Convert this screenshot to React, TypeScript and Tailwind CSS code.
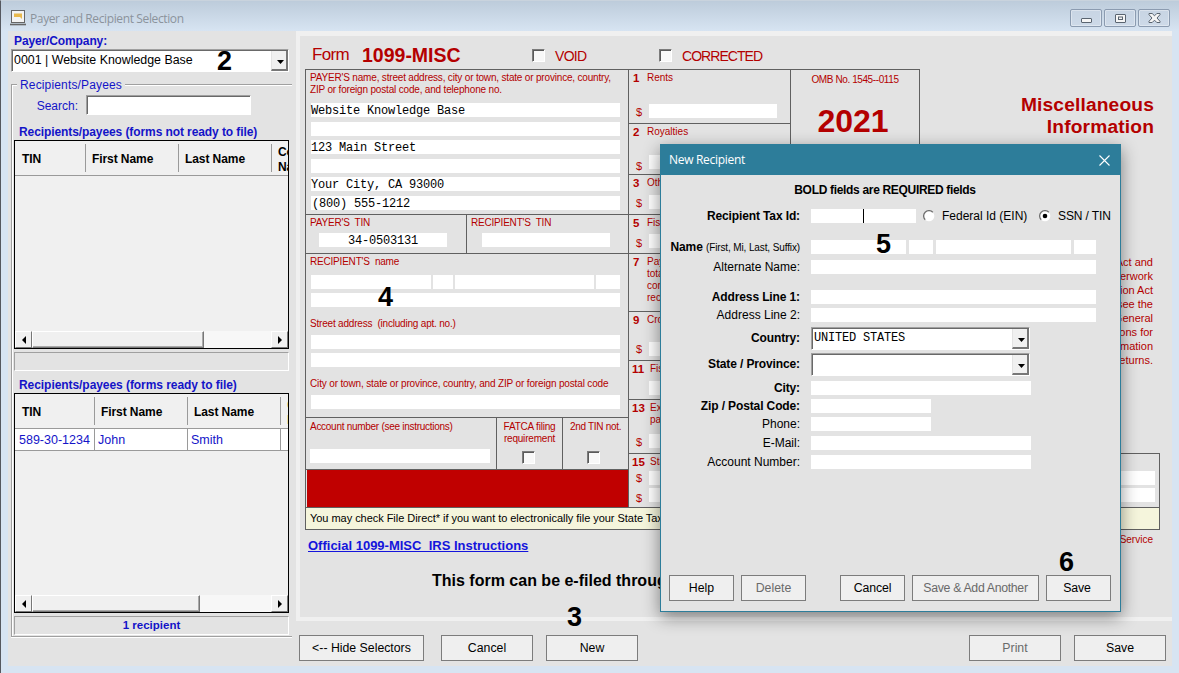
import { ReactNode } from "react";
import clsx from "clsx";

function Field({ className, children }: { className?: string; children?: ReactNode }) {
  return (
    <div className={clsx("h-[14px] shrink-0 whitespace-pre bg-white font-['Liberation_Mono',monospace] text-[12px] leading-[17px] tracking-[-0.2px] text-black", className)}>
      {children}
    </div>
  );
}

function Checkbox({ className }: { className?: string }) {
  return (
    <div className={clsx("h-[13px] w-[13px] shrink-0 border border-r-white border-b-white border-t-[#7b7b7b] border-l-[#7b7b7b] bg-[#f8f8f8]", className)}>
      <div className="h-full w-full border-t border-l border-t-[#5a5a5a] border-l-[#5a5a5a]" />
    </div>
  );
}

function Radio({ checked }: { checked?: boolean }) {
  return (
    <svg width="12" height="12" viewBox="0 0 12 12" className="shrink-0">
      <circle cx="6" cy="6" r="5.3" fill="#fff" />
      <path d="M2.2 9.8A5.3 5.3 0 0 1 9.8 2.2" fill="none" stroke="#6f6f6f" strokeWidth="1.3" />
      {checked && <circle cx="6" cy="6" r="2.3" fill="#000" />}
    </svg>
  );
}

function Combo({ className, children }: { className?: string; children?: ReactNode }) {
  return (
    <div className={clsx("flex shrink-0 border border-t-[#a0a0a0] border-l-[#a0a0a0] border-r-white border-b-white bg-white", className)}>
      <div className="flex w-full border-t border-l border-[#696969]">
        <div className="flex-1 overflow-hidden whitespace-pre">{children}</div>
        <div className="flex w-[17px] items-center justify-center border-r-2 border-b-2 border-l border-r-[#777] border-b-[#777] border-l-[#e3e3e3] bg-[#f0f0f0]">
          <svg width="7" height="4" viewBox="0 0 7 4" className="mt-[3px] ml-[2px]"><path d="M0 0h7L3.5 4z" fill="#000" /></svg>
        </div>
      </div>
    </div>
  );
}

function Button({ className, disabled, children }: { className?: string; disabled?: boolean; children: ReactNode }) {
  return (
    <button className={clsx("h-[26px] shrink-0 whitespace-nowrap border border-[#7c7c7c] bg-[#efefef] text-center text-[12.3px] leading-[24px]", disabled ? "text-[#6a6a6a]" : "text-black", className)}>
      {children}
    </button>
  );
}

function ScrollBar({ thumb }: { thumb: string }) {
  const arrow = "flex h-[17px] w-[17px] items-center justify-center border border-t-white border-l-white border-r-[#777] border-b-[#777] bg-[#f0f0f0]";
  return (
    <div className="flex h-[17px] shrink-0 bg-[#f7f7f7]">
      <div className={arrow}>
        <svg width="4" height="8" viewBox="0 0 4 8"><path d="M4 0v8L0 4z" fill="#000" /></svg>
      </div>
      <div className={clsx("border border-t-white border-l-white border-r-[#777] border-b-[#777] bg-[#f0f0f0] shadow-[inset_-1px_-1px_0_#a9a9a9]", thumb)} />
      <div className="flex-1" />
      <div className={arrow}>
        <svg width="4" height="8" viewBox="0 0 4 8"><path d="M0 0v8l4-4z" fill="#000" /></svg>
      </div>
    </div>
  );
}

function HeadCell({ className, children }: { className: string; children?: ReactNode }) {
  return (
    <div className={clsx("my-[3px] flex shrink-0 items-center border-r border-[#9a9a9a] pt-[3px] text-[12px] font-bold leading-[15px] tracking-[-0.08px]", className)}>
      {children}
    </div>
  );
}

function Sidebar() {
  return (
    <aside className="flex h-[635px] w-[288px] shrink-0 flex-col bg-[#e3e3e3] text-[#1414c8]">
      <div className="ml-[6px] h-[18px] text-[12px] font-bold leading-[21px] tracking-[-0.12px]">Payer/Company:</div>
      <Combo className="ml-[3px] h-[23px] w-[278px]">
        <div className="pl-px text-[12.4px] leading-[18px] text-black">0001 | Website Knowledge Base</div>
      </Combo>
      <div className="mt-[12px] ml-[3px] h-[553px] w-[281px] border border-r-0 border-[#a0a0a0] shadow-[inset_1px_1px_0_#fff,0_1px_0_#fff]">
        <div className="-mt-[8px] ml-[5px] h-[18px] w-fit bg-[#e3e3e3] px-[3px] text-[12px] leading-[17px] tracking-[0.15px]">
          Recipients/Payees
        </div>
        <div className="flex h-[21px]">
          <span className="w-[66px] text-right text-[12px] leading-[22px]">Search:</span>
          <div className="ml-[8px] h-[20px] w-[165px] border border-t-[#a0a0a0] border-l-[#a0a0a0] border-r-white border-b-white bg-white">
            <div className="h-full border-t border-l border-[#696969]" />
          </div>
        </div>
        <div className="ml-[7px] h-[24px] whitespace-nowrap text-[12px] font-bold leading-[32px] tracking-[-0.09px]">Recipients/payees (forms not ready to file)</div>
        <div className="ml-[2px] flex h-[209px] w-[275px] flex-col border border-black bg-[#f0f0f0]">
          <div className="flex h-[35px] shrink-0 overflow-hidden border-b border-[#9a9a9a] text-black">
            <HeadCell className="w-[71px] pl-[7px]">TIN</HeadCell>
            <HeadCell className="w-[93px] pl-[6px]">First Name</HeadCell>
            <HeadCell className="w-[93px] pl-[6px]">Last Name</HeadCell>
            <HeadCell className="w-[93px] pl-[6px]">Company<br />Name</HeadCell>
          </div>
          <div className="flex-1" />
          <ScrollBar thumb="w-[172px]" />
        </div>
        <div className="mt-[3px] ml-[2px] h-[19px] w-[275px] border border-t-[#a0a0a0] border-l-[#a0a0a0] border-r-white border-b-white" />
        <div className="ml-[7px] h-[22px] whitespace-nowrap text-[12px] font-bold leading-[28px] tracking-[-0.06px]">Recipients/payees (forms ready to file)</div>
        <div className="ml-[2px] flex h-[220px] w-[275px] flex-col border border-black bg-[#f0f0f0]">
          <div className="flex h-[35px] shrink-0 overflow-hidden border-b border-[#9a9a9a] text-black">
            <HeadCell className="w-[80px] pl-[7px]">TIN</HeadCell>
            <HeadCell className="w-[93px] pl-[6px]">First Name</HeadCell>
            <HeadCell className="w-[93px] pl-[6px]">Last Name</HeadCell>
            <HeadCell className="w-[93px] pl-[6px] text-[#e0b060]">Company<br />Name</HeadCell>
          </div>
          <div className="flex h-[22px] shrink-0 overflow-hidden border-b border-[#9a9a9a] bg-white text-[12.5px] leading-[22px]">
            <div className="w-[80px] border-r border-[#9a9a9a] pl-[4px]">589-30-1234</div>
            <div className="w-[93px] border-r border-[#9a9a9a] pl-[3px]">John</div>
            <div className="w-[93px] border-r border-[#9a9a9a] pl-[3px]">Smith</div>
          </div>
          <div className="flex-1" />
          <ScrollBar thumb="w-[168px]" />
        </div>
        <div className="mt-[3px] ml-[2px] h-[19px] w-[275px] border border-t-[#a0a0a0] border-l-[#a0a0a0] border-r-white border-b-white text-center text-[11.5px] font-bold leading-[17px]">
          1 recipient
        </div>
      </div>
    </aside>
  );
}

type AmountRow = { no: string; label: ReactNode; height: string; field: string; sign?: string };

const amountRows: AmountRow[] = [
  { no: "1", label: "Rents", height: "h-[54px]", field: "mt-[17px]", sign: "leading-[16px]" },
  { no: "2", label: "Royalties", height: "h-[51px]", field: "mt-[14px]", sign: "leading-[22px]" },
  { no: "3", label: "Other", height: "h-[40px]", field: "mt-[3px]", sign: "leading-[16px]" },
  { no: "5", label: "Fishing", height: "h-[39px]", field: "mt-[2px]", sign: "leading-[18px]" },
  { no: "7", label: <>Payer<br />totaling<br />consumer<br />recipient</>, height: "h-[58px]", field: "hidden" },
  { no: "9", label: "Crop", height: "h-[49px]", field: "mt-[13px]", sign: "leading-[14px]" },
  { no: "11", label: "Fish", height: "h-[39px]", field: "mt-[3px]" },
  { no: "13", label: <>Excess<br />payments</>, height: "h-[54px]", field: "mt-[8px]", sign: "leading-[16px]" },
];

function Amount({ row }: { row: AmountRow }) {
  return (
    <div className={clsx("shrink-0 overflow-hidden border-b border-[#606060]", row.height)}>
      <div className="flex pt-[2px]">
        <span className={clsx("w-[18px] shrink-0 text-[11.5px] font-bold leading-[13px]", row.no.length > 1 ? "pl-[3px]" : "pl-[4px]")}>{row.no}</span>
        <span className={clsx("min-h-[15px] whitespace-nowrap text-[10px] leading-[12px]", row.no.length > 1 && "pl-[3px]")}>{row.label}</span>
      </div>
      <div className={clsx("flex", row.field)}>
        <span className={clsx("w-[20px] pl-[7px] text-[11px]", row.sign)}>{row.sign ? "$" : ""}</span>
        <Field className="w-[128px]" />
      </div>
    </div>
  );
}

function PayerColumn() {
  return (
    <div className="flex w-[323px] shrink-0 flex-col border-r border-[#606060] text-[10px] leading-[12px] tracking-[-0.2px]">
      <div className="h-[145px] border-b border-[#606060] pt-[2px] pl-[5px]">
        <div className="-ml-px h-[31px] whitespace-nowrap tracking-[-0.18px]">
          PAYER'S name, street address, city or town, state or province, country,<br />
          ZIP or foreign postal code, and telephone no.
        </div>
        <Field className="w-[309px]">Website Knowledge Base</Field>
        <Field className="mt-[5px] w-[309px]" />
        <Field className="mt-[4px] w-[309px]">123 Main Street</Field>
        <Field className="mt-[5px] w-[309px]" />
        <Field className="mt-[4px] w-[309px]">Your City, CA 93000</Field>
        <Field className="mt-[5px] w-[309px] pl-px">(800) 555-1212</Field>
      </div>
      <div className="flex h-[39px] border-b border-[#606060]">
        <div className="w-[161px] border-r border-[#606060] pt-[2px] pl-[4px]">
          <div className="h-[16px]">PAYER'S&nbsp; TIN</div>
          <Field className="ml-[9px] w-[128px] text-center">34-0503131</Field>
        </div>
        <div className="pt-[2px] pl-[4px]">
          <div className="h-[16px]">RECIPIENT'S&nbsp; TIN</div>
          <Field className="ml-[11px] w-[128px]" />
        </div>
      </div>
      <div className="h-[164px] border-b border-[#606060] pt-[2px] pl-[4px]">
        <div className="h-[19px]">RECIPIENT'S&nbsp; name</div>
        <div className="ml-px flex gap-[2px]">
          <Field className="w-[120px]" />
          <Field className="w-[20px]" />
          <Field className="w-[139px]" />
          <Field className="w-[24px]" />
        </div>
        <Field className="mt-[4px] ml-px w-[309px]" />
        <div className="mt-[11px] h-[17px]">Street address&nbsp; (including apt. no.)</div>
        <Field className="ml-px w-[309px]" />
        <Field className="mt-[4px] ml-px w-[309px]" />
        <div className="mt-[11px] h-[17px] whitespace-nowrap tracking-[-0.15px]">City or town, state or province, country, and ZIP or foreign postal code</div>
        <Field className="ml-px w-[309px]" />
      </div>
      <div className="flex h-[52px] border-b border-[#606060]">
        <div className="w-[191px] border-r border-[#606060] pt-[3px] pl-[4px]">
          <div className="h-[28px] tracking-[-0.28px]">Account number (see instructions)</div>
          <Field className="w-[180px]" />
        </div>
        <div className="flex w-[66px] flex-col items-center border-r border-[#606060] pt-[3px] text-center">
          <div className="h-[30px]">FATCA filing<br />requirement</div>
          <Checkbox className="-ml-[2px]" />
        </div>
        <div className="flex flex-1 flex-col items-center pt-[3px] text-center">
          <div className="h-[30px] tracking-[-0.3px]">2nd TIN not.</div>
          <Checkbox className="-ml-[4px]" />
        </div>
      </div>
      <div className="ml-px h-[37px] bg-[#c00000]" />
    </div>
  );
}

function TaxForm() {
  return (
    <main className="h-[590px] w-[876px] shrink-0 overflow-hidden border-t-[5px] border-b-4 border-l-4 border-[#f0f0f0] bg-[#e3e3e3] text-[#b40000]">
      <div className="flex h-[33px] pl-[12px]">
        <span className="w-[50px] text-[17px] leading-[38px] tracking-[-0.7px]">Form</span>
        <span className="w-[170px] text-[19.5px] font-bold leading-[38px]">1099-MISC</span>
        <Checkbox className="mt-[13px]" />
        <span className="ml-[10px] w-[104px] text-[14px] leading-[40px] tracking-[-0.7px]">VOID</span>
        <Checkbox className="mt-[13px]" />
        <span className="ml-[10px] text-[14px] leading-[40px] tracking-[-0.95px]">CORRECTED</span>
      </div>
      <div className="flex">
        <div className="ml-[5px] flex h-[439px] w-[615px] shrink-0 border-t border-l border-[#606060]">
          <PayerColumn />
          <div className="flex w-[291px] shrink-0 flex-col">
            <div className="flex h-[384px]">
              <div className="w-[161px] shrink-0">
                {amountRows.map((row) => <Amount key={row.no} row={row} />)}
              </div>
              <div className="w-[130px] border-r border-l border-[#606060] text-center">
                <div className="pt-[3px] text-[10px] leading-[13px] tracking-[-0.4px]">OMB No. 1545--0115</div>
                <div className="mt-[17px] -ml-[4px] text-[32px] font-bold leading-[36px]">2021</div>
              </div>
            </div>
            <div className="-mt-px h-[55px] w-[531px] shrink-0 border-t border-r border-[#606060]">
              <div className="flex pt-px">
                <span className="w-[21px] pl-[3px] text-[11.5px] font-bold leading-[14px]">15</span>
                <span className="text-[10px] leading-[14px]">State</span>
              </div>
              <div className="mt-[2px] flex">
                <span className="w-[20px] pl-[7px] text-[11px] leading-[14px]">$</span>
                <Field className="w-[506px]" />
              </div>
              <div className="mt-[3px] flex">
                <span className="w-[20px] pl-[7px] text-[11px] leading-[20px]">$</span>
                <Field className="w-[506px]" />
              </div>
            </div>
          </div>
        </div>
        <div className="w-[234px] text-right">
          <div className="mt-[25px] text-[19.2px] font-bold leading-[22px] tracking-[0.15px]">Miscellaneous<br />Information</div>
          <div className="mt-[117px] pr-px text-[11px] leading-[14px]">
            Act and<br />Paperwork<br />Reduction Act<br />see the<br />General<br />Instructions for<br />Information<br />Returns.
          </div>
        </div>
      </div>
      <div className="-mt-px ml-[5px] h-[23px] w-[855px] border border-[#606060] bg-[#f5f5dc] pl-[4px] text-[11px] leading-[21px] tracking-[-0.04px] text-black">
        You may check File Direct* if you want to electronically file your State Tax
      </div>
      <div className="flex justify-between pr-[19px] pl-[8px]">
        <a className="text-[13px] font-bold leading-[31px] text-[#1414dc] underline">Official 1099-MISC&nbsp; IRS Instructions</a>
        <span className="text-[10px] leading-[20px]">Service</span>
      </div>
      <div className="mt-[9px] ml-[132px] text-[16px] font-bold leading-[22px] text-black">This form can be e-filed through</div>
    </main>
  );
}

function Row({ label, bold, className, children }: { label: ReactNode; bold?: boolean; className: string; children: ReactNode }) {
  return (
    <div className={clsx("flex h-[14px] shrink-0", className)}>
      <div className={clsx("mr-[11px] w-[139px] shrink-0 whitespace-nowrap text-right text-[12px] leading-[14px]", bold && "font-bold tracking-[-0.12px]")}>{label}</div>
      {children}
    </div>
  );
}

function RecipientDialog() {
  return (
    <div className="absolute top-[143px] left-[659px] flex h-[468px] w-[461px] flex-col border border-[#2d7d9a] bg-[#e3e3e3] text-black shadow-[0_5px_16px_rgba(0,0,0,0.45)]">
      <div className="flex h-[30px] shrink-0 items-center justify-between bg-[#2d7d9a] pr-[10px] pl-[8px]">
        <span className="font-['Open_Sans',sans-serif] text-[12px] tracking-[-0.3px] text-white">New Recipient</span>
        <svg width="11" height="11" viewBox="0 0 11 11"><path d="M.5.5l10 10M10.5.5l-10 10" stroke="#fff" strokeWidth="1.1" /></svg>
      </div>
      <div className="mt-[8px] h-[15px] pr-[11px] text-center text-[12px] font-bold leading-[15px] tracking-[-0.32px]">
        BOLD fields are REQUIRED fields
      </div>
      <Row label="Recipient Tax Id:" bold className="mt-[11px]">
        <Field className="w-[105px] pl-[52px]"><div className="h-[14px] w-px bg-black" /></Field>
        <div className="ml-[7px] flex w-[200px] items-center whitespace-nowrap text-[12px]">
          <Radio />
          <span className="ml-[7px] w-[97px]">Federal Id (EIN)</span>
          <Radio checked />
          <span className="ml-[7px] tracking-[-0.1px]">SSN / TIN</span>
        </div>
      </Row>
      <Row label={<>Name <span className="text-[10px] font-normal">(First, Mi, Last, Suffix)</span></>} bold className="mt-[17px]">
        <Field className="w-[95px]" />
        <Field className="ml-[3px] w-[24px]" />
        <Field className="ml-[3px] w-[135px]" />
        <Field className="ml-[3px] w-[22px]" />
      </Row>
      <Row label="Alternate Name:" className="mt-[6px]"><Field className="w-[285px]" /></Row>
      <Row label="Address Line 1:" bold className="mt-[16px]"><Field className="w-[285px]" /></Row>
      <Row label="Address Line 2:" className="mt-[4px]"><Field className="w-[285px]" /></Row>
      <Row label="Country:" bold className="mt-[9px]">
        <Combo className="-mt-[4px] h-[23px] w-[219px]">
          <div className="pl-px font-['Liberation_Mono',monospace] text-[12px] leading-[19px] tracking-[-0.2px]">UNITED STATES</div>
        </Combo>
      </Row>
      <Row label="State / Province:" bold className="mt-[12px]"><Combo className="-mt-[4px] h-[23px] w-[219px]" /></Row>
      <Row label="City:" bold className="mt-[10px]"><Field className="w-[220px]" /></Row>
      <Row label="Zip / Postal Code:" bold className="mt-[4px]"><Field className="w-[120px]" /></Row>
      <Row label="Phone:" className="mt-[4px]"><Field className="w-[120px]" /></Row>
      <Row label="E-Mail:" className="mt-[5px]"><Field className="w-[220px]" /></Row>
      <Row label="Account Number:" className="mt-[5px]"><Field className="w-[220px]" /></Row>
      <div className="mt-[106px] flex gap-[7px] pl-[8px]">
        <Button className="w-[65px]">Help</Button>
        <Button className="w-[65px]" disabled>Delete</Button>
        <Button className="ml-[27px] w-[65px] tracking-[-0.1px]">Cancel</Button>
        <Button className="w-[127px] tracking-[-0.32px]" disabled>Save &amp; Add Another</Button>
        <Button className="w-[65px] pr-[3px] tracking-[-0.1px]">Save</Button>
      </div>
    </div>
  );
}

function TitleBar() {
  const box = "flex h-[18px] w-[32px] items-center justify-center rounded-[2px] border border-[#8b9bb0] bg-[#c9d6e5]/60 shadow-[inset_0_0_0_1px_rgba(255,255,255,0.35)]";
  return (
    <header className="flex h-[31px] shrink-0 bg-linear-to-b from-[#bccbda] to-[#d7e4f2] pt-[9px] pl-[9px]">
      <svg width="16" height="17" viewBox="0 0 16 17" className="shrink-0">
        <rect x="1.5" y="1.5" width="13" height="12" fill="#f3f3f3" stroke="#666" />
        <path d="M0 15.5h16" stroke="#666" strokeWidth="1.6" />
        <path d="M4 4.500h8v5.500l-2-2H4z" fill="#e8b84c" />
      </svg>
      <span className="ml-[4px] flex-1 font-['Open_Sans',sans-serif] text-[12px] leading-[19px] tracking-[-0.38px] text-[#8b939c]">Payer and Recipient Selection</span>
      <div className="flex gap-[2px] pr-[9px]">
        <div className={box}>
          <svg width="11" height="5" viewBox="0 0 11 5" className="mt-1"><rect x=".5" y=".5" width="10" height="4" rx=".5" fill="#f5f5f5" stroke="#5a6470" /></svg>
        </div>
        <div className={box}>
          <svg width="11" height="9" viewBox="0 0 11 9"><rect x=".5" y=".5" width="10" height="8" rx=".5" fill="#f5f5f5" stroke="#5a6470" /><rect x="3.5" y="3" width="4" height="2.5" fill="#f5f5f5" stroke="#5a6470" /></svg>
        </div>
        <div className={box}>
          <svg width="13" height="10" viewBox="0 0 13 10">
            <path d="M1 .5h3.200l2.300 2.300L8.800.500H12v1.200L9 5l3 3.300v1.200H8.800L6.500 7.200 4.200 9.500H1V8.300L4 5 1 1.700z" fill="#f5f5f5" stroke="#5a6470" />
          </svg>
        </div>
      </div>
    </header>
  );
}

export default function App() {
  const callout = "absolute text-[27px] font-bold leading-none text-black";
  return (
    <div className="relative flex h-[673px] w-[1179px] flex-col overflow-hidden border-t border-l border-t-[#c9d3dd] border-l-[#55585f] bg-[#d7e4f2] font-['Liberation_Sans',Arial,sans-serif]">
      <div className="-mt-px flex h-full flex-col">
        <TitleBar />
        <div className="ml-[7px] flex h-[635px] w-[1164px] shrink-0 bg-[#e3e3e3]">
          <Sidebar />
          <div>
            <TaxForm />
            <div className="mt-[14px] flex pl-[3px]">
              <Button className="w-[125px]">&lt;-- Hide Selectors</Button>
              <Button className="ml-[17px] w-[92px]">Cancel</Button>
              <Button className="ml-[13px] w-[92px]">New</Button>
              <Button className="ml-[331px] w-[92px]" disabled>Print</Button>
              <Button className="ml-[13px] w-[92px]">Save</Button>
            </div>
          </div>
        </div>
      </div>
      <RecipientDialog />
      <span className={clsx(callout, "top-[47px] left-[216px]")}>2</span>
      <span className={clsx(callout, "top-[603px] left-[566px]")}>3</span>
      <span className={clsx(callout, "top-[283px] left-[377px]")}>4</span>
      <span className={clsx(callout, "top-[230px] left-[875px]")}>5</span>
      <span className={clsx(callout, "top-[548px] left-[1058px]")}>6</span>
    </div>
  );
}
